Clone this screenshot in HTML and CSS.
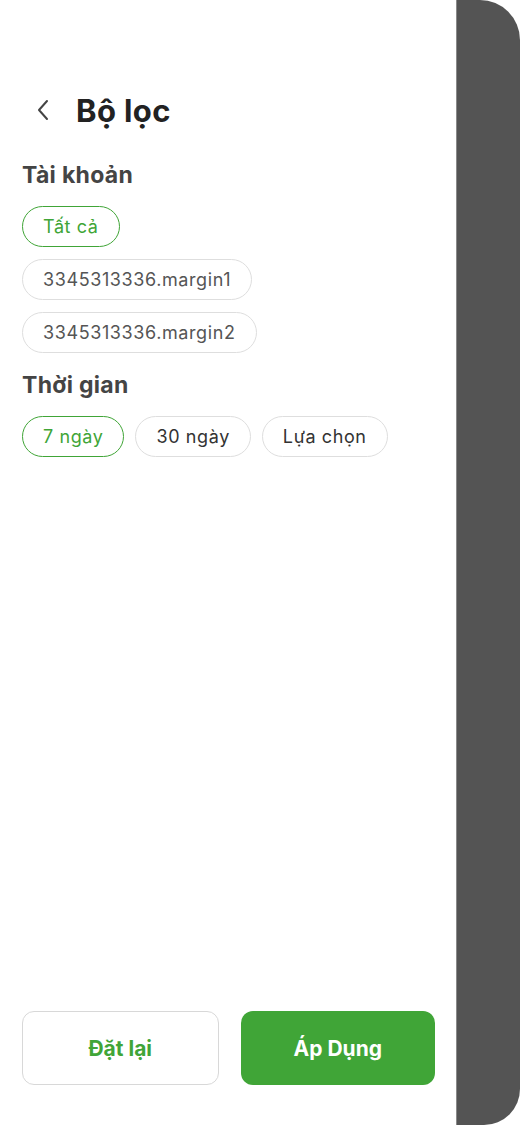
FILE: index.html
```html
<!DOCTYPE html>
<html lang="vi">
<head>
<meta charset="utf-8">
<link rel="stylesheet" href="styles.css">
</head>
<body>
<div class="screen">
  <div class="drawer">
    <div class="content">
      <div class="header">
        <svg class="back" width="14" height="22" viewBox="0 0 14 22"><path d="M11 2 L3 11 L11 20" fill="none" stroke="#444" stroke-width="2" stroke-linecap="round" stroke-linejoin="round"/></svg>
        <h1 class="title">Bộ lọc</h1>
      </div>
      <h2 class="section first">Tài khoản</h2>
      <div class="chips col">
        <span class="chip active">Tất cả</span>
        <span class="chip">3345313336.margin1</span>
        <span class="chip">3345313336.margin2</span>
      </div>
      <h2 class="section">Thời gian</h2>
      <div class="chips row">
        <span class="chip active">7 ngày</span>
        <span class="chip dark">30 ngày</span>
        <span class="chip dark">Lựa chọn</span>
      </div>
    </div>
    <div class="actions">
      <button class="btn reset">Đặt lại</button>
      <button class="btn apply">Áp Dụng</button>
    </div>
  </div>
  <div class="backdrop"></div>
</div>
</body>
</html>
```
FILE: styles.css
```css
* { box-sizing: border-box; }
html, body { margin: 0; padding: 0; background: #fff; }
body { font-family: Inter, "Noto Sans", sans-serif; }
.screen { display: flex; width: 520px; height: 1125px; }
.drawer {
  width: 456px;
  display: flex;
  flex-direction: column;
  justify-content: space-between;
  padding: 0 21px 40px 22px;
  background: #fff;
}
.backdrop {
  flex: 1;
  background: #545454;
  border-radius: 0 40px 36px 0;
  border-left: 1px solid #8a8a8a;
}
.content { padding-top: 88px; }
.header { display: flex; align-items: center; height: 44px; }
.back { margin-left: 14px; margin-right: 26px; }
.title { margin: 0; font-size: 31px; font-weight: 700; color: #222; letter-spacing: 0.4px; }
.section { margin: 18px 0 17px; font-size: 23px; font-weight: 700; color: #444; line-height: 28px; letter-spacing: 0.3px; }
.section.first { margin-top: 29px; }
.chips { display: flex; }
.chips.col { flex-direction: column; align-items: flex-start; gap: 12px; }
.chips.row { gap: 11px; }
.chip {
  display: inline-flex; align-items: center;
  height: 41px; padding: 0 20px;
  border: 1px solid #dedede; border-radius: 21px;
  font-size: 18px; letter-spacing: 0.6px; color: #555;
}
.chip.dark { color: #333; }
.chip.active { border: 1.5px solid #40a537; color: #40a537; }
.actions { display: flex; gap: 22px; }
.btn {
  flex: 1; height: 74px; border-radius: 12px;
  font-family: inherit; font-size: 21px; font-weight: 700;
}
.reset { background: #fff; border: 1px solid #d8d8d8; color: #40a537; }
.apply { background: #40a537; border: none; color: #fff; }
```
